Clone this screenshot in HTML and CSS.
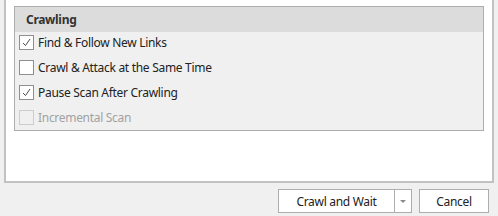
FILE: index.html
```html
<!DOCTYPE html>
<html lang="en">
<head>
    <meta charset="UTF-8">
    <title>Crawling</title>
<link rel="stylesheet" href="styles.css">
</head>
<body>
    <div class="panel">
        <div class="group">
            <div class="group-title">Crawling</div>
            <div class="group-body">
                <label class="opt">
                    <span class="box"><svg width="11" height="11" viewBox="0 0 11 11"><polyline points="2,6 4.5,8.5 9,2" fill="none" stroke="#4a4a4a" stroke-width="1"/></svg></span>
                    Find &amp; Follow New Links
                </label>
                <label class="opt">
                    <span class="box"></span>
                    Crawl &amp; Attack at the Same Time
                </label>
                <label class="opt">
                    <span class="box"><svg width="11" height="11" viewBox="0 0 11 11"><polyline points="2,6 4.5,8.5 9,2" fill="none" stroke="#4a4a4a" stroke-width="1"/></svg></span>
                    Pause Scan After Crawling
                </label>
                <label class="opt off">
                    <span class="box"></span>
                    Incremental Scan
                </label>
            </div>
        </div>
    </div>
    <div class="buttons">
        <div class="split">
            <div class="split-main">Crawl and Wait</div>
            <div class="split-arrow"><span class="tri"></span></div>
        </div>
        <div class="btn">Cancel</div>
    </div>
</body>
</html>
```

FILE: styles.css
```css
* {
    margin: 0;
    padding: 0;
    box-sizing: border-box;
}
body {
    background: #f0f0f0;
    font-family: "Noto Sans", "Open Sans", sans-serif;
    font-size: 12px;
    letter-spacing: -0.3px;
    color: #222;
    width: 498px;
    height: 216px;
    overflow: hidden;
}
.panel {
    margin-left: 4px;
    width: 490px;
    height: 183px;
    background: white;
    border: 2px solid #c2c2c2;
    border-top: none;
    padding: 6px 8px 0 8px;
}
.group {
    border: 1px solid #adadad;
    background: #f0f0f0;
}
.group-title {
    height: 25px;
    background: #dcdcdc;
    font-weight: bold;
    color: #333;
    padding-left: 11px;
    display: flex;
    align-items: center;
}
.group-body {
    padding: 3px 0 5px 4px;
    display: flex;
    flex-direction: column;
    gap: 10px;
}
.opt {
    height: 15px;
    display: flex;
    align-items: center;
    gap: 4px;
}
.box {
    width: 15px;
    height: 15px;
    border: 1px solid #8f8f8f;
    background: white;
    display: flex;
    align-items: center;
    justify-content: center;
}
.off {
    color: #a2a2a2;
}
.off .box {
    border-color: #cdcdcd;
    background: #f0f0f0;
}
.buttons {
    display: flex;
    justify-content: flex-end;
    gap: 7px;
    padding: 6px 9px 0 0;
}
.split {
    display: flex;
    height: 24px;
    border: 1px solid #adadad;
    background: white;
}
.split-main {
    width: 116px;
    display: flex;
    align-items: center;
    justify-content: center;
    border-right: 1px solid #adadad;
}
.split-arrow {
    width: 16px;
    display: flex;
    align-items: center;
    justify-content: center;
}
.tri {
    width: 0;
    height: 0;
    border-left: 3px solid transparent;
    border-right: 3px solid transparent;
    border-top: 3px solid #8a8a8a;
}
.btn {
    width: 70px;
    height: 24px;
    border: 1px solid #adadad;
    background: white;
    display: flex;
    align-items: center;
    justify-content: center;
}
```
